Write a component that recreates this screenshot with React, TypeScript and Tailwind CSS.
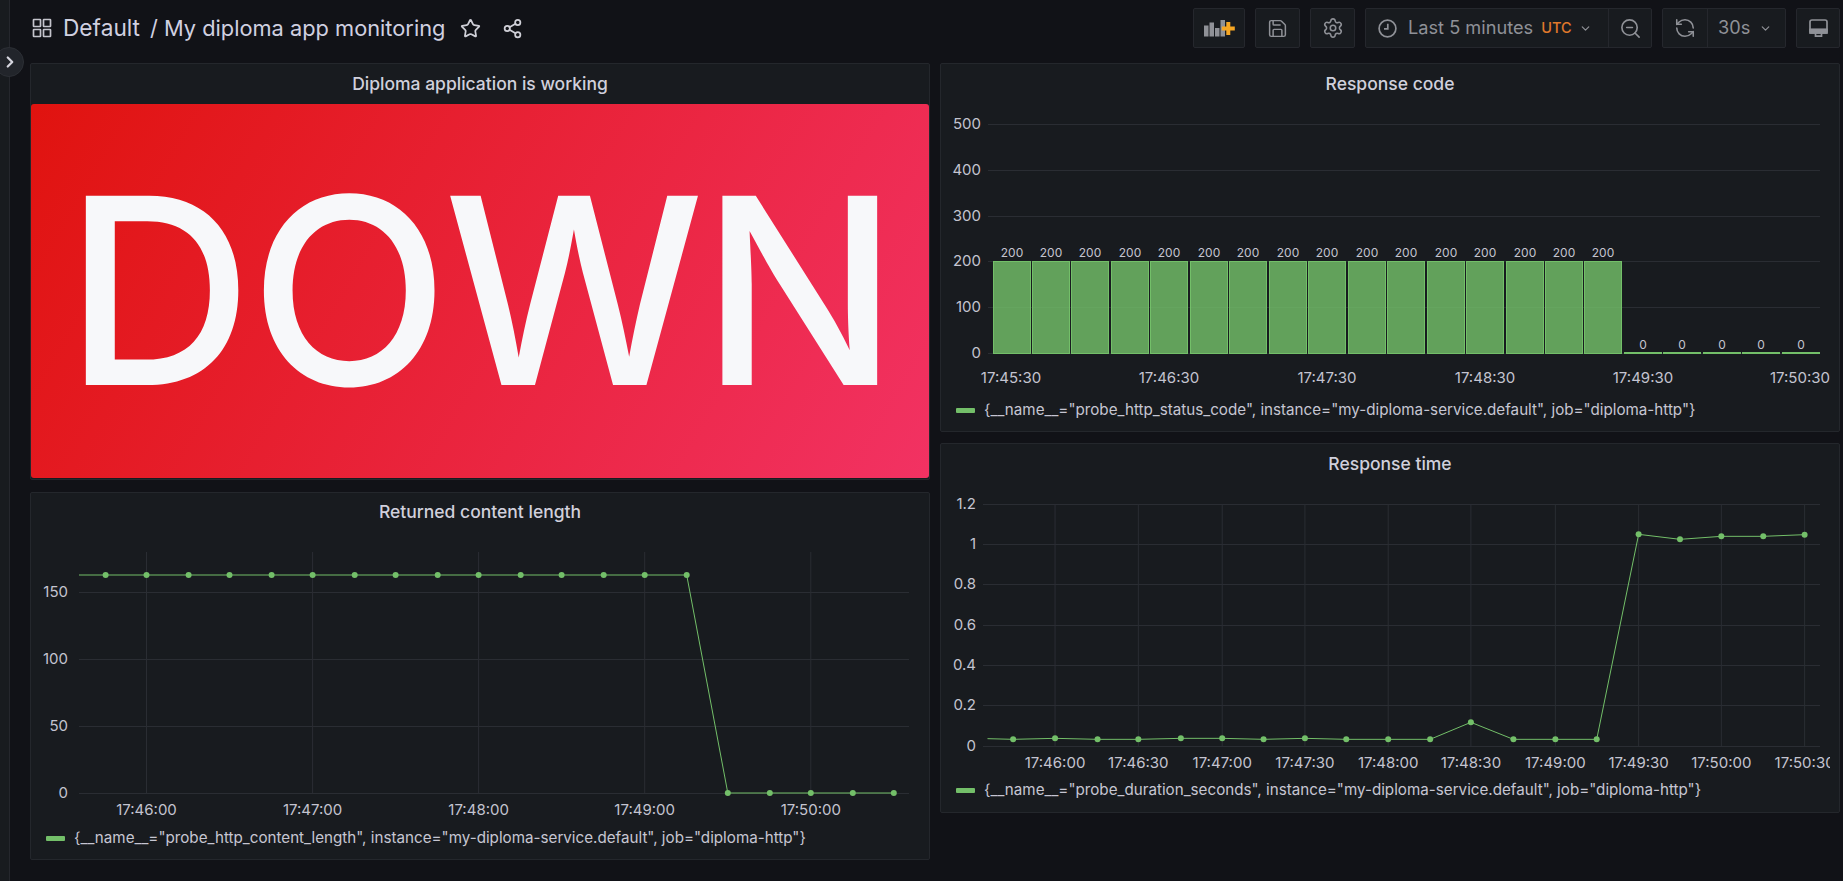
import { ChevronDown, ChevronRight, RefreshCcw, Save, Settings, Share2, Star, ZoomOut } from "lucide-react";

const GREEN = "#73bf69";
const GRID = "#2a2d33";
const LABEL = "#c4c4d0";
const FONT = "font-['Inter',sans-serif]";

function Btn({ className = "", children }: { className?: string; children: React.ReactNode }) {
  return (
    <div className={`h-10 flex items-center rounded-[2px] border border-[#25272d] bg-[#181b1f] text-[#8f9197] ${className}`}>
      {children}
    </div>
  );
}

function Legend({ name, className }: { name: string; className: string }) {
  return (
    <div className={`flex items-center pl-[15px] text-[15.2px] text-[#c6c6d2] whitespace-nowrap ${className}`}>
      <span className="w-[19px] h-[5px] rounded-[1px] bg-[#73bf69] mr-[9px]" />
      {`{__name__="${name}", instance="my-diploma-service.default", job="diploma-http"}`}
    </div>
  );
}

function Panel({ title, className, titleClass = "pt-[1px]", children }: { title: string; className: string; titleClass?: string; children: React.ReactNode }) {
  return (
    <section className={`rounded-[2px] border border-[#24272c] bg-[#181b1f] flex flex-col ${className}`}>
      <h2 className={`h-[40px] shrink-0 flex items-center justify-center text-[17.5px] font-medium text-[#d0d0dc] ${titleClass}`}>{title}</h2>
      {children}
    </section>
  );
}

function AxisText({ x, y, children, anchor = "middle", size = 15 }: { x: number; y: number; children: React.ReactNode; anchor?: "middle" | "end"; size?: number }) {
  return (
    <text x={x} y={y} textAnchor={anchor} fontSize={size} fill={LABEL} fontFamily="Inter, sans-serif">
      {children}
    </text>
  );
}

function CodeChart() {
  const ys: [string, number][] = [["500", 124], ["400", 170], ["300", 216], ["200", 261], ["100", 307], ["0", 353]];
  const lefts = [106, 173, 240, 309, 376, 445, 512, 580, 647, 716, 783, 852, 919, 988, 1055, 1122].map((v) => Math.round(930 + v / 1.717));
  const zeros = [1190, 1257, 1326, 1393, 1462].map((v) => Math.round(930 + v / 1.717));
  const xl: [string, number][] = [["17:45:30", 1010], ["17:46:30", 1168], ["17:47:30", 1326], ["17:48:30", 1484], ["17:49:30", 1642], ["17:50:30", 1799]];
  return (
    <svg viewBox="940 104 898 291" className="block w-[898px] h-[291px] shrink-0">
      {ys.map(([l, y]) => (
        <g key={l}>
          <line x1={987} x2={1819} y1={y + 0.5} y2={y + 0.5} stroke={GRID} />
          <AxisText x={980} y={y + 5} anchor="end">{l}</AxisText>
        </g>
      ))}
      {lefts.map((x) => (
        <g key={x}>
          <rect x={x + 0.5} y={261.5} width={37} height={92} fill="#73bf69" fillOpacity={0.82} stroke={GREEN} strokeWidth={1} />
          <AxisText x={x + 19} y={257} size={12}>200</AxisText>
        </g>
      ))}
      {zeros.map((x) => (
        <g key={x}>
          <rect x={x} y={352} width={38} height={2} fill={GREEN} />
          <AxisText x={x + 19} y={349} size={12}>0</AxisText>
        </g>
      ))}
      {xl.map(([l, x]) => (
        <AxisText key={l} x={x} y={383}>{l}</AxisText>
      ))}
    </svg>
  );
}

function LengthChart() {
  const ys: [string, number][] = [["150", 592], ["100", 659], ["50", 726], ["0", 793]];
  const xs: [string, number][] = [["17:46:00", 146.5], ["17:47:00", 312.6], ["17:48:00", 478.6], ["17:49:00", 644.7], ["17:50:00", 810.8]];
  const high = [105.6, 146.5, 188.6, 229.5, 271.6, 312.6, 354.7, 395.6, 437.7, 478.6, 520.7, 561.6, 603.7, 644.7, 686.7];
  const low = [727.8, 769.8, 810.8, 852.8, 893.8];
  const line = `79,575 ${high.map((x) => `${x},575`).join(" ")} ${low.map((x) => `${x},793`).join(" ")}`;
  return (
    <svg viewBox="31 533 898 290" className="block w-[898px] h-[290px] shrink-0">
      {ys.map(([l, y]) => (
        <g key={l}>
          <line x1={79} x2={909} y1={y + 0.5} y2={y + 0.5} stroke={GRID} />
          <AxisText x={68} y={y + 5} anchor="end">{l}</AxisText>
        </g>
      ))}
      {xs.map(([l, x]) => (
        <g key={l}>
          <line x1={x} x2={x} y1={552} y2={793} stroke={GRID} />
          <AxisText x={x} y={815}>{l}</AxisText>
        </g>
      ))}
      <polyline points={line} fill="none" stroke={GREEN} strokeWidth={1} />
      {high.map((x) => <circle key={x} cx={x} cy={575} r={3} fill={GREEN} />)}
      {low.map((x) => <circle key={x} cx={x} cy={793} r={3} fill={GREEN} />)}
    </svg>
  );
}

function TimeChart() {
  const ys: [string, number][] = [["1.2", 504], ["1", 544], ["0.8", 584], ["0.6", 625], ["0.4", 665], ["0.2", 705], ["0", 746]];
  const X = (v: number) => 930 + v / 1.717;
  const xs: [string, number][] = [["17:46:00", 213], ["17:46:30", 356], ["17:47:00", 500], ["17:47:30", 642], ["17:48:00", 785], ["17:48:30", 927], ["17:49:00", 1072], ["17:49:30", 1215], ["17:50:00", 1357], ["17:50:30", 1500]];
  const pts: [number, number][] = [[141, 898], [213, 895], [286, 898], [356, 898], [429, 895], [500, 895], [571, 898], [642, 895], [713, 898], [785, 898], [857, 898], [927, 847], [1000, 898], [1072, 898], [1143, 898], [1215, 283], [1286, 298], [1357, 289], [1429, 289], [1500, 284]];
  const P = pts.map(([x, y]) => [X(x), 440 + y / 3]);
  const line = `${X(97)},${440 + 896 / 3} ${P.map(([x, y]) => `${x},${y}`).join(" ")}`;
  return (
    <svg viewBox="940 484 898 291" className="block w-[898px] h-[291px] shrink-0">
      <defs>
        <clipPath id="tc"><rect x={940} y={484} width={889} height={291} /></clipPath>
      </defs>
      {ys.map(([l, y]) => (
        <g key={l}>
          <line x1={982} x2={1819} y1={y + 0.5} y2={y + 0.5} stroke={GRID} />
          <AxisText x={975} y={y + 5} anchor="end">{l}</AxisText>
        </g>
      ))}
      <g clipPath="url(#tc)">
        {xs.map(([l, v]) => (
          <g key={l}>
            <line x1={X(v)} x2={X(v)} y1={504} y2={746} stroke={GRID} />
            <AxisText x={X(v)} y={768}>{l}</AxisText>
          </g>
        ))}
      </g>
      <polyline points={line} fill="none" stroke={GREEN} strokeWidth={1} />
      {P.map(([x, y]) => <circle key={x} cx={x} cy={y} r={3} fill={GREEN} />)}
    </svg>
  );
}

export default function App() {
  return (
    <div className={`relative flex h-[881px] w-[1843px] overflow-hidden bg-[#111217] ${FONT}`}>
      <aside className="w-[10px] shrink-0 border-r border-[#25272d] bg-[#181b1f]" />
      <button className="absolute left-[-6px] top-[47px] w-[30px] h-[30px] rounded-full border border-[#2c2f35] bg-[#22252b] flex items-center justify-end pr-[4px] text-[#d5d5de]">
        <ChevronRight size={18} strokeWidth={3} />
      </button>
      <div className="flex-1 min-w-0 flex flex-col">
        <header className="h-[56px] shrink-0 flex items-center pl-[22px] pr-[3px] text-[#cdcdda]">
          <svg width="20" height="20" viewBox="0 0 20 20" fill="none" stroke="#c4c4cc" strokeWidth="1.7" className="mr-[11px]">
            <rect x="1.5" y="1.5" width="7" height="7" rx="0.5" />
            <rect x="11.5" y="1.5" width="7" height="7" rx="0.5" />
            <rect x="1.5" y="11.5" width="7" height="7" rx="0.5" />
            <rect x="11.5" y="11.5" width="7" height="7" rx="0.5" />
          </svg>
          <span className="text-[22.7px] text-[#d0d0e0]">Default</span>
          <span className="text-[21.8px] text-[#d0d0e0] ml-[10px]">/ My diploma app monitoring</span>
          <Star size={21} strokeWidth={2} className="ml-[15px] text-[#d0d0d8]" />
          <Share2 size={21} strokeWidth={2} className="ml-[21px] text-[#d0d0d8]" />
          <div className="ml-auto flex gap-[10px]">
            <Btn className="w-[52px] justify-center">
              <svg width="31" height="17" viewBox="0 0 31 17">
                <rect x="0" y="5.5" width="4.5" height="11" fill="#8f9197" />
                <rect x="5.5" y="2.5" width="4.5" height="14" fill="#8f9197" />
                <rect x="11" y="8" width="4.5" height="8.5" fill="#8f9197" />
                <rect x="16.5" y="0" width="4.5" height="16.5" fill="#8f9197" />
                <path d="M22.3 2h4v4.5h4.5v4h-4.5V15h-4v-4.5h-4.5v-4h4.5z" fill="#f6a623" />
              </svg>
            </Btn>
            <Btn className="w-[45px] justify-center"><Save size={21} strokeWidth={1.7} /></Btn>
            <Btn className="w-[45px] justify-center"><Settings size={22} strokeWidth={1.7} /></Btn>
            <Btn className="w-[287px]">
              <div className="w-[243px] h-full flex items-center pl-[12px] border-r border-[#25272d] shrink-0">
                <svg width="19" height="19" viewBox="0 0 19 19" fill="none" stroke="currentColor" strokeWidth="1.7" className="shrink-0">
                  <circle cx="9.5" cy="9.5" r="8.4" />
                  <path d="M9.8 4.8v5H6" />
                </svg>
                <span className="ml-[11px] text-[18.2px] whitespace-nowrap">Last 5 minutes</span>
                <span className="ml-[8px] text-[14.5px] font-medium text-[#e0782b]">UTC</span>
                <ChevronDown size={13} strokeWidth={2.2} className="ml-[7px] shrink-0" />
              </div>
              <div className="flex-1 flex justify-center"><ZoomOut size={23} strokeWidth={1.7} /></div>
            </Btn>
            <Btn className="w-[124px]">
              <div className="w-[45px] h-full flex items-center justify-center border-r border-[#25272d] shrink-0"><RefreshCcw size={22} strokeWidth={1.7} /></div>
              <span className="ml-[10px] text-[18.2px]">30s</span>
              <ChevronDown size={13} strokeWidth={2.2} className="ml-[9px]" />
            </Btn>
            <Btn className="w-[44px] justify-center">
              <svg width="19" height="19" viewBox="0 0 19 19" fill="none" stroke="currentColor" strokeWidth="1.7">
                <rect x="1" y="1" width="17" height="13" rx="2" />
                <path d="M1 10.5h17" />
                <rect x="1" y="10.5" width="17" height="3.5" fill="currentColor" />
                <path d="M6.5 14v3.2h6V14" />
              </svg>
            </Btn>
          </div>
        </header>
        <main className="flex gap-[10px] pl-[20px] pt-[7px]">
          <div className="w-[900px] flex flex-col gap-[12px]">
            <Panel title="Diploma application is working" className="h-[417px]">
              <div className="h-[374px] rounded-[3px] flex items-center justify-center bg-[linear-gradient(120deg,#e0130f,#f23263)] text-[260px] font-[450] tracking-[-3px] leading-none text-[#f7f8fa] overflow-hidden">
                DOWN
              </div>
            </Panel>
            <Panel title="Returned content length" className="h-[368px]" titleClass="pb-[2px]">
              <LengthChart />
              <Legend name="probe_http_content_length" className="h-[30px]" />
            </Panel>
          </div>
          <div className="w-[900px] flex flex-col gap-[11px]">
            <Panel title="Response code" className="h-[369px]">
              <CodeChart />
              <Legend name="probe_http_status_code" className="h-[30px]" />
            </Panel>
            <Panel title="Response time" className="h-[370px]">
              <TimeChart />
              <Legend name="probe_duration_seconds" className="h-[30px]" />
            </Panel>
          </div>
        </main>
      </div>
    </div>
  );
}
